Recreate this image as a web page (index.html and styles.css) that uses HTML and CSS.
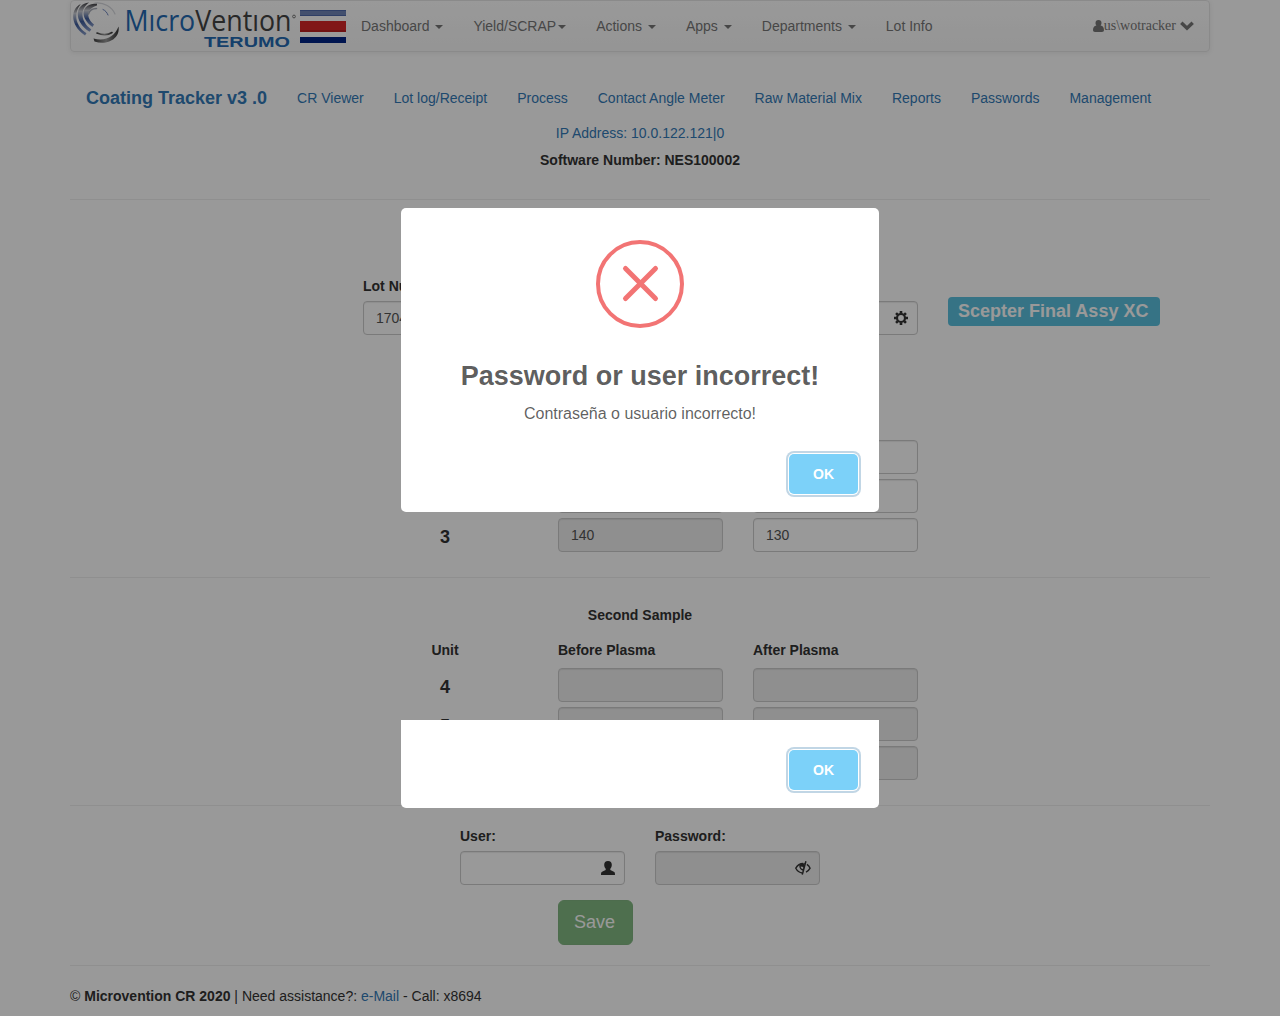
FILE: index.html
```html
<!DOCTYPE html>
<html lang="en">
<head>
<meta charset="utf-8">
<title>Coating Tracker</title>
<link rel="stylesheet" href="styles.css">
</head>
<body>
<div class="container">
  <nav class="navbar">
    <svg class="logo" width="227" height="50" viewBox="0 0 227 50">
      <defs>
        <linearGradient id="arm" x1="0" y1="0" x2="0" y2="1"><stop offset="0" stop-color="#3c3c40"/><stop offset=".3" stop-color="#c9ccd4"/><stop offset=".65" stop-color="#3f5d9d"/><stop offset="1" stop-color="#8da0cb"/></linearGradient>
        <linearGradient id="steel" x1="0" y1="0" x2="1" y2="0"><stop offset="0" stop-color="#3f3f3f"/><stop offset=".5" stop-color="#999"/><stop offset="1" stop-color="#333"/></linearGradient>
      </defs>
      <g fill="url(#arm)">
        <path d="M9.700 3C-.5 8-1.500 24 14 34.500l1.500-2.300C4.500 25 2 13 9.700 3z"/>
        <path d="M18 1.500C4 3 2 20 18.500 30.800l1.800-2.300C9 20 9 8 18 1.500z"/>
        <path d="M26 2.500C9 3 9 17 21.500 26l1.500-2.500C15 17 15 8 26 4.500z"/>
      </g>
      <g fill="none" stroke-linecap="round">
        <path d="M17.500 13c1-3.500 4-5.500 8-5.500" stroke="#aaaeb9" stroke-width="1.500"/>
        <path d="M32 8.500c2.500 1 4 3 5 5.500" stroke="#6b83bd"/>
        <path d="M24 2c9-1 17 4 20 11" stroke="#d5d7dc" stroke-width="1.200"/>
        <path d="M26 32c5 2 11 2 15-.5" stroke="url(#steel)" stroke-width="1.600"/>
      </g>
      <path fill="url(#steel)" d="M22.500 37.500c12 3 21-1.500 25-12C49.500 37 37 45 23.500 40.500z"/>
      <text x="53.500" y="29.500" class="logo-name" textLength="167" lengthAdjust="spacingAndGlyphs"><tspan fill="#236ab2">Mıcro</tspan><tspan fill="#444">Ventıon</tspan></text>
      <circle cx="223" cy="15.500" r="1.400" fill="none" stroke="#777"/>
      <text x="133" y="46" class="logo-owner" textLength="86" lengthAdjust="spacingAndGlyphs">TERUMO</text>
    </svg>
    <svg class="flag" width="46" height="33" viewBox="0 0 46 33"><path fill="#fff" d="M0 0h46v33H0z"/><path fill="#7186b8" d="M0 0h46v6H0z"/><path fill="#4f6aab" d="M0 0h46v1H0zM0 5h46v1H0z"/><path fill="#d82728" d="M0 11h46v11H0z"/><path fill="#b91e20" d="M0 20h46v2H0z"/><path fill="#002486" d="M0 27h46v6H0z"/></svg>
    <div class="menu">
      <a>Dashboard <b class="caret"></b></a>
      <a>Yield/SCRAP<b class="caret"></b></a>
      <a>Actions <b class="caret"></b></a>
      <a>Apps <b class="caret"></b></a>
      <a>Departments <b class="caret"></b></a>
      <a>Lot Info</a>
    </div>
    <div class="account">
      <svg width="11" height="12" viewBox="0 0 11 12"><path fill="currentColor" d="M5.500 0a3 3 0 0 1 3 3c0 1.200-.4 2-.9 2.600C10 5.700 11 8 11 10c0 1.300-.7 2-2 2H2c-1.300 0-2-.7-2-2 0-2 1-4.300 3.400-4.400C2.900 5 2.500 4.200 2.500 3a3 3 0 0 1 3-3z"/></svg>
      <span>us\wotracker</span>
      <svg class="chevron" width="14" height="10" viewBox="0 0 14 10"><path fill="none" stroke="currentColor" stroke-width="3.400" d="M1.300 1.700 7 7.200l5.700-5.500"/></svg>
    </div>
  </nav>

  <div class="subnav">
    <a class="brand">Coating Tracker v3 .0</a><a>CR Viewer</a><a>Lot log/Receipt</a><a>Process</a><a>Contact Angle Meter</a><a>Raw Material Mix</a><a>Reports</a><a>Passwords</a><a>Management</a>
  </div>
  <div class="address">IP Address: 10.0.122.121|0</div>
  <div class="software">Software Number: NES100002</div>

  <section class="lot">
    <div class="lot-row">
      <div class="lot-field">
        <label>Lot Number:</label>
        <div class="control">1704</div>
      </div>
      <div class="control settings">
        <svg width="14" height="14" viewBox="0 0 14 14"><g fill="none" stroke="currentColor"><circle cx="7" cy="7" r="4" stroke-width="2.200"/><path stroke-width="2.600" d="M7 0v2.500M7 11.500V14M0 7h2.500M11.500 7H14M2.050 2.050 3.800 3.800M10.200 10.200l1.750 1.750M2.050 11.950 3.800 10.200M10.200 3.800l1.750-1.750"/></g></svg>
      </div>
      <span class="tag">Scepter Final Assy XC</span>
    </div>
    <div class="samples first">
      <span></span><div class="control readonly"></div><div class="control"></div>
      <span></span><div class="control readonly"></div><div class="control"></div>
      <span class="unit">3</span><div class="control readonly">140</div><div class="control">130</div>
    </div>
  </section>

  <section class="second">
    <h4>Second Sample</h4>
    <div class="samples heads"><b class="unit-head">Unit</b><b>Before Plasma</b><b>After Plasma</b></div>
    <div class="samples">
      <span class="unit">4</span><div class="control readonly"></div><div class="control readonly"></div>
      <span class="unit">5</span><div class="control readonly"></div><div class="control readonly"></div>
      <span class="unit">6</span><div class="control readonly"></div><div class="control readonly"></div>
    </div>
  </section>

  <section class="sign">
    <div class="credentials">
      <div><label>User:</label><div class="control icon-end">
        <svg width="14" height="14" viewBox="0 0 14 14"><path fill="currentColor" d="M7 0c2.600 0 3.800 1.500 3.800 3.800 0 1.600-.6 3-1.500 4v1.100c1.400.9 2.900 1.300 3.900 2 .6.400.8 1.100.8 3.100H0c0-2 .2-2.700.8-3.100 1-.7 2.500-1.100 3.900-2V7.800c-.9-1-1.500-2.400-1.500-4C3.200 1.500 4.400 0 7 0z"/></svg></div></div>
      <div><label>Password:</label><div class="control readonly password">
        <svg width="16" height="14" viewBox="0 0 16 14"><g fill="none" stroke="currentColor"><path stroke-width="1.400" d="M7.400 12C4.500 11.600 2.100 9.700.8 7.200 2.400 4.300 5 2.500 8.200 2.500M11.900 3.400c1.400 1 2.500 2.300 3.200 3.800-.9 1.700-2.300 3.200-4.100 4"/><path stroke-width="1.500" d="M10.900.3 7.300 13.600"/></g><path fill="currentColor" d="M4.300 3.500 9.900 2 8.300 9.600C5.600 9.500 4 7 4.300 3.500zm1.400 2c0 1.300.9 2.300 2.200 2.400l.5-1.900z" fill-rule="evenodd"/></svg></div></div>
    </div>
    <button class="save" disabled>Save</button>
  </section>

  <footer>© <b>Microvention CR 2020</b> | Need assistance?: <a>e-Mail</a> - Call: x8694</footer>
</div>

<div class="overlay">
  <div class="modal">
    <svg class="error" width="88" height="88" viewBox="0 0 88 88"><g fill="none" stroke="#f27474"><circle cx="44" cy="44" r="42" stroke-width="4"/><path stroke-width="5" stroke-linecap="round" d="m29.500 28.500 30 30m0-30-30 30"/></g></svg>
    <h2>Password or user incorrect!</h2>
    <p>Contraseña o usuario incorrecto!</p>
    <div class="actions"><button class="ok">OK</button></div>
  </div>
  <div class="modal tail"><div class="actions"><button class="ok">OK</button></div></div>
</div>
</body>
</html>
```
FILE: styles.css
```css
* { box-sizing: border-box; }
body {
  margin: 0;
  height: 1016px;
  overflow: hidden;
  position: relative;
  font: 14px/20px "Liberation Sans", Arial, sans-serif;
  color: #333;
  background: #fff;
}
a { color: #337ab7; }
.container { width: 1140px; margin: 0 auto; }

.navbar {
  display: flex;
  height: 52px;
  border: 1px solid #e7e7e7;
  border-radius: 4px;
  background: linear-gradient(#fff, #f8f8f8);
  box-shadow: 0 1px 5px rgba(0, 0, 0, .075);
  color: #777;
}
.logo { flex: none; }
.logo-name { font: 28.5px "Open Sans", sans-serif; }
.logo-owner { font: bold 14.5px "Liberation Sans", Arial, sans-serif; fill: #236ab2; }
.flag { flex: none; margin: 9px 15px 0 2px; }
.menu { display: flex; gap: 30px; padding-top: 15px; white-space: nowrap; }
.menu a { color: #777; }
.caret {
  display: inline-block;
  margin-left: 2px;
  vertical-align: middle;
  border-top: 4px solid;
  border-left: 4px solid transparent;
  border-right: 4px solid transparent;
}
.account { display: flex; align-items: center; margin-left: auto; padding-right: 15px; font-family: "Liberation Serif", serif; }
.chevron { margin-left: 4px; }

.subnav { display: flex; align-items: center; gap: 30px; height: 50px; margin: 21px 0 0 16px; white-space: nowrap; }
.brand { font-size: 18px; font-weight: bold; }
.address { text-align: center; color: #337ab7; }
.software { height: 49px; padding-top: 7px; text-align: center; font-weight: bold; }

section { border-top: 1px solid #eee; }
label { display: block; margin-bottom: 5px; font-weight: bold; }
.control {
  width: 165px;
  height: 34px;
  padding: 6px 12px;
  border: 1px solid #ccc;
  border-radius: 4px;
  background: #fff;
  box-shadow: inset 0 1px 1px rgba(0, 0, 0, .075);
  color: #555;
}
.control.readonly { background: #eee; }
.lot { height: 378px; margin-top: 7px; padding-top: 76px; }
.lot-row { display: flex; align-items: flex-end; height: 59px; margin-left: 293px; }
.lot-field { width: 390px; }
.settings, .icon-end, .password { display: flex; align-items: center; justify-content: flex-end; color: #333; }
.settings, .icon-end { padding-right: 9px; }
.password { padding-right: 8px; }
.tag {
  margin: 0 0 9px 30px;
  padding: 4px 12px 5px 10px;
  border-radius: 4px;
  background: #5bc0de;
  color: #fff;
  font-size: 18px;
  font-weight: bold;
  white-space: nowrap;
}
.samples { display: grid; grid-template-columns: 183px 165px 195px; row-gap: 5px; margin-left: 305px; }
.samples > :nth-child(3n) { margin-left: 30px; }
.samples.first { margin-top: 105px; }
.unit { width: 140px; padding-top: 9px; text-align: center; font-size: 18px; font-weight: bold; }
.second { height: 228px; padding-top: 27px; }
.second h4 { margin: 0 0 15px; text-align: center; font-size: 14px; }
.heads { margin-bottom: 8px; }
.unit-head { width: 140px; text-align: center; }
.sign { height: 160px; padding-top: 20px; }
.credentials { display: flex; gap: 30px; margin-left: 390px; }
.save {
  display: block;
  height: 45px;
  width: 75px;
  margin: 15px 0 0 488px;
  padding: 0 2px 0 0;
  border: 1px solid #3e8f3e;
  border-radius: 6px;
  background: #419641;
  color: #fff;
  font: 18px "Liberation Sans", Arial, sans-serif;
  opacity: .65;
}
footer { border-top: 1px solid #eee; padding-top: 20px; }

.overlay { position: absolute; inset: 0; background: rgba(0, 0, 0, .4); }
.modal {
  position: absolute;
  left: 401px;
  top: 208px;
  width: 478px;
  height: 304px;
  display: flex;
  flex-direction: column;
  align-items: center;
  padding-top: 32px;
  border-radius: 5px;
  background: #fff;
  text-align: center;
}
.error { flex: none; }
.modal h2 { margin: 33px 0 0; font-size: 27px; line-height: 31px; color: rgba(0, 0, 0, .65); }
.modal p { margin: 12px 0 0; font-size: 16px; line-height: 20px; color: rgba(0, 0, 0, .64); }
.actions { align-self: flex-end; margin: auto 21px 18px auto; }
.ok {
  display: block;
  width: 69px;
  height: 40px;
  padding: 0;
  border: 0;
  border-radius: 5px;
  background: #7cd1f9;
  box-shadow: 0 0 0 1px #fff, 0 0 0 3px rgba(43, 114, 165, .29);
  color: #fff;
  font: bold 14px "Liberation Sans", Arial, sans-serif;
}
.modal.tail { top: 720px; height: 88px; padding: 0; border-radius: 0 0 5px 5px; }
```
